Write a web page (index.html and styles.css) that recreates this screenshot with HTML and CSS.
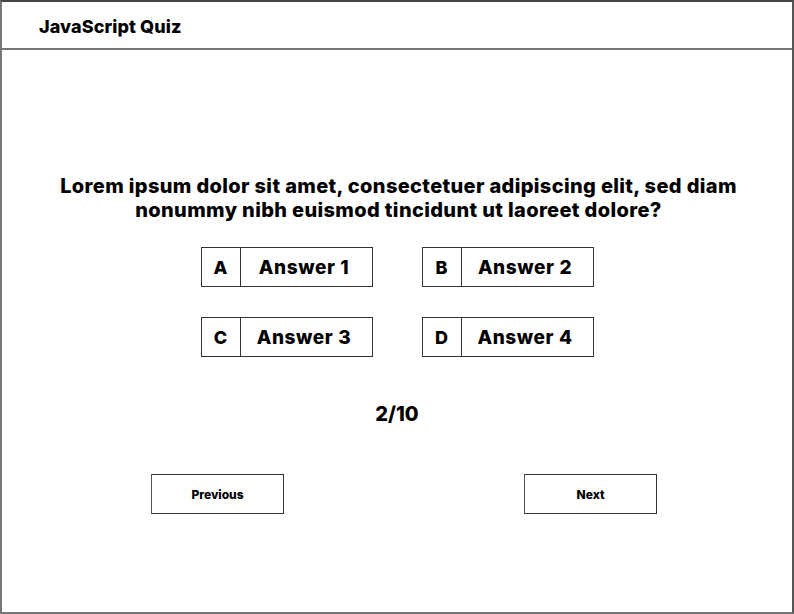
FILE: index.html
```html
<!DOCTYPE html>
<html>
<head>
<meta charset="utf-8">
<link rel="stylesheet" href="styles.css">
</head>
<body>
<div class="frame">
  <header class="header">JavaScript Quiz</header>
  <main class="main">
    <h1 class="question">Lorem ipsum dolor sit amet, consectetuer adipiscing elit, sed diam<br>nonummy nibh euismod tincidunt ut laoreet dolore?</h1>
    <div class="options">
      <div class="option"><span class="letter">A</span><span class="answer">Answer 1</span></div>
      <div class="option"><span class="letter">B</span><span class="answer">Answer 2</span></div>
      <div class="option"><span class="letter">C</span><span class="answer">Answer 3</span></div>
      <div class="option"><span class="letter">D</span><span class="answer">Answer 4</span></div>
    </div>
    <div class="counter">2/10</div>
    <div class="nav">
      <button class="btn">Previous</button>
      <button class="btn">Next</button>
    </div>
  </main>
</div>
</body>
</html>
```
FILE: styles.css
```css
* { box-sizing: border-box; }
html, body { margin: 0; padding: 0; background: #fff; }
body { font-family: "Inter", "Lato", sans-serif; color: #000; }
.frame {
  width: 794px;
  height: 614px;
  border: 2px solid #777;
  border-top-color: #444;
  border-right-color: #555;
  display: flex;
  flex-direction: column;
}
.header {
  height: 48px;
  border-bottom: 2px solid #777;
  padding-left: 37px;
  display: flex;
  align-items: center;
  font-size: 18px;
  font-weight: 800;
  padding-top: 3px;
  letter-spacing: 0.1px;
}
.main {
  display: flex;
  flex-direction: column;
  align-items: center;
  padding-top: 124px;
}
.question {
  margin: 0;
  font-size: 20px;
  line-height: 24px;
  font-weight: 800;
  text-align: center;
  letter-spacing: 0.36px;
  padding-left: 3px;
}
.options {
  margin-top: 25px;
  display: grid;
  grid-template-columns: 172px 172px;
  column-gap: 49px;
  row-gap: 30px;
}
.option {
  height: 40px;
  border: 1px solid #333;
  display: flex;
}
.letter {
  width: 39px;
  border-right: 1px solid #333;
  display: flex;
  align-items: center;
  justify-content: center;
  font-size: 18px;
  font-weight: 800;
}
.answer {
  flex: 1;
  display: flex;
  align-items: center;
  justify-content: center;
  font-size: 19px;
  font-weight: 800;
  letter-spacing: 0.6px;
  padding-right: 4px;
}
.counter {
  margin-top: 45px;
  font-size: 20px;
  line-height: 24px;
  font-weight: 800;
}
.nav {
  margin-top: 48px;
  width: 506px;
  margin-left: 14px;
  display: flex;
  justify-content: space-between;
}
.btn {
  width: 133px;
  height: 40px;
  background: #fff;
  border: 1px solid #333;
  border-left-color: #555;
  font-family: "Inter", "Lato", sans-serif;
  font-size: 12px;
  font-weight: 800;
  color: #000;
  padding: 0;
}
```
